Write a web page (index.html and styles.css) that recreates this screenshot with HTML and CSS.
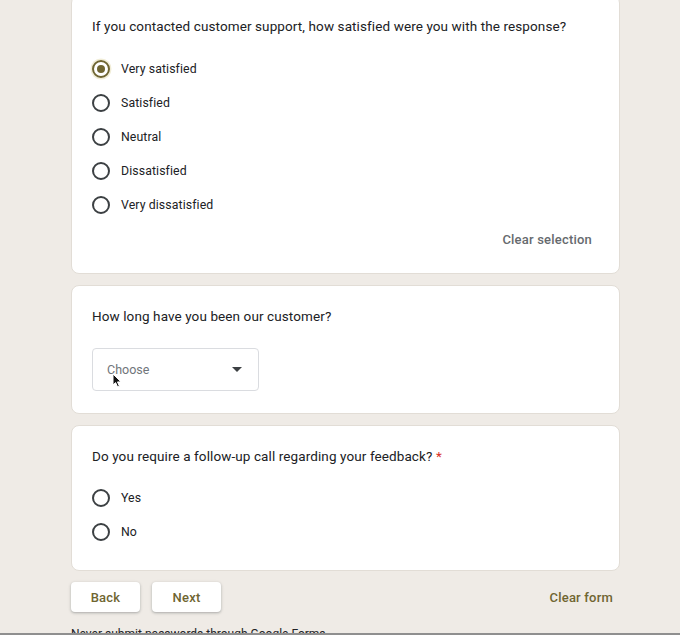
FILE: index.html
```html
<!DOCTYPE html>
<html>
<head>
<meta charset="utf-8">
<link rel="stylesheet" href="styles.css">
</head>
<body>
<div class="viewport">
  <div class="page">
    <section class="card card-first">
      <div class="question">If you contacted customer support, how satisfied were you with the response?</div>
      <div class="options">
        <div class="option"><span class="radio checked"><span class="dot"></span></span><span class="label">Very satisfied</span></div>
        <div class="option"><span class="radio"></span><span class="label">Satisfied</span></div>
        <div class="option"><span class="radio"></span><span class="label">Neutral</span></div>
        <div class="option"><span class="radio"></span><span class="label">Dissatisfied</span></div>
        <div class="option"><span class="radio"></span><span class="label">Very dissatisfied</span></div>
      </div>
      <div class="clear-row"><span class="clear-sel">Clear selection</span></div>
    </section>

    <section class="card card-second">
      <div class="question">How long have you been our customer?</div>
      <div class="select">
        <span class="placeholder">Choose</span>
        <svg class="caret" width="10" height="5" viewBox="0 0 10 5"><path d="M0 0 L10 0 L5 5 Z" fill="#3c4043"/></svg>
        <svg class="cursor" width="11" height="15" viewBox="0 0 11 15"><path d="M1 1 L1 12 L3.6 9.6 L5.6 14 L7.4 13.2 L5.5 8.9 L9 8.9 Z" fill="#111" stroke="#fff" stroke-width="1"/></svg>
      </div>
    </section>

    <section class="card card-third">
      <div class="question">Do you require a follow-up call regarding your feedback? <span class="req">*</span></div>
      <div class="options">
        <div class="option"><span class="radio"></span><span class="label">Yes</span></div>
        <div class="option"><span class="radio"></span><span class="label">No</span></div>
      </div>
    </section>

    <div class="nav">
      <div class="nav-left">
        <span class="btn">Back</span>
        <span class="btn">Next</span>
      </div>
      <span class="clear-form">Clear form</span>
    </div>

    <div class="footer">Never submit passwords through Google Forms.</div>
  </div>
</div>
<div class="bottom-bar"></div>
</body>
</html>
```
FILE: styles.css
```css
* { box-sizing: border-box; }
html, body {
  margin: 0;
  padding: 0;
  background: #efebe6;
  font-family: Roboto, "Liberation Sans", Arial, sans-serif;
  color: #202124;
}
.viewport {
  height: 633px;
  overflow: hidden;
}
.page {
  width: 549px;
  margin: -5px 0 0 71px;
  display: flex;
  flex-direction: column;
  gap: 11px;
}
.card {
  background: #fff;
  border: 1px solid #e2ddd6;
  border-radius: 8px;
  padding: 20px 20px 0 20px;
}
.card-first { padding-bottom: 17px; }
.card-second { padding-bottom: 22px; }
.card-third { padding-bottom: 21px; }
.question {
  font-size: 13.5px;
  line-height: 20px;
  letter-spacing: 0.1px;
}
.req { color: #d93025; }
.options {
  margin-top: 16px;
  display: flex;
  flex-direction: column;
}
.card-third .options { margin-top: 15px; }
.option {
  height: 34px;
  display: flex;
  align-items: center;
  gap: 11px;
}
.radio {
  width: 18px;
  height: 18px;
  border: 2px solid #3c4043;
  border-radius: 50%;
  display: flex;
  align-items: center;
  justify-content: center;
  flex: none;
}
.radio.checked {
  border-color: #6f6531;
  box-shadow: 0 0 0 1.5px rgba(214, 204, 140, 0.35);
}
.dot {
  width: 8px;
  height: 8px;
  border-radius: 50%;
  background: #6f6531;
}
.label {
  font-size: 12.3px;
  line-height: 16px;
  letter-spacing: 0.1px;
}
.clear-row {
  height: 34px;
  display: flex;
  align-items: center;
  justify-content: flex-end;
  padding-right: 7px;
}
.clear-sel {
  font-size: 13px;
  font-weight: 500;
  color: #666a6e;
  letter-spacing: 0.2px;
}
.select {
  position: relative;
  margin-top: 22px;
  width: 167px;
  height: 43px;
  border: 1px solid #dadce0;
  border-radius: 4px;
  display: flex;
  align-items: center;
  padding: 0 14px;
  justify-content: space-between;
}
.placeholder {
  font-size: 12.5px;
  color: #70757a;
}
.caret { margin-right: 2px; }
.cursor {
  position: absolute;
  left: 19px;
  top: 24px;
}
.nav {
  display: flex;
  justify-content: space-between;
  align-items: center;
  margin-top: 0;
}
.nav-left {
  display: flex;
  gap: 12px;
}
.btn {
  width: 69px;
  height: 30px;
  background: #fff;
  border-radius: 4px;
  box-shadow: 0 1px 2px rgba(60, 64, 67, 0.25), 0 1px 3px 1px rgba(60, 64, 67, 0.1);
  display: flex;
  align-items: center;
  justify-content: center;
  font-size: 13px;
  font-weight: 500;
  color: #6f6531;
  letter-spacing: 0.2px;
}
.clear-form {
  font-size: 13px;
  font-weight: 500;
  color: #6f6531;
  letter-spacing: 0.2px;
  margin-right: 7px;
}
.footer {
  margin-top: 3px;
  font-size: 12px;
  line-height: 16px;
  color: #202124;
}
.bottom-bar {
  height: 2px;
  background: #8f8f8f;
}
```
